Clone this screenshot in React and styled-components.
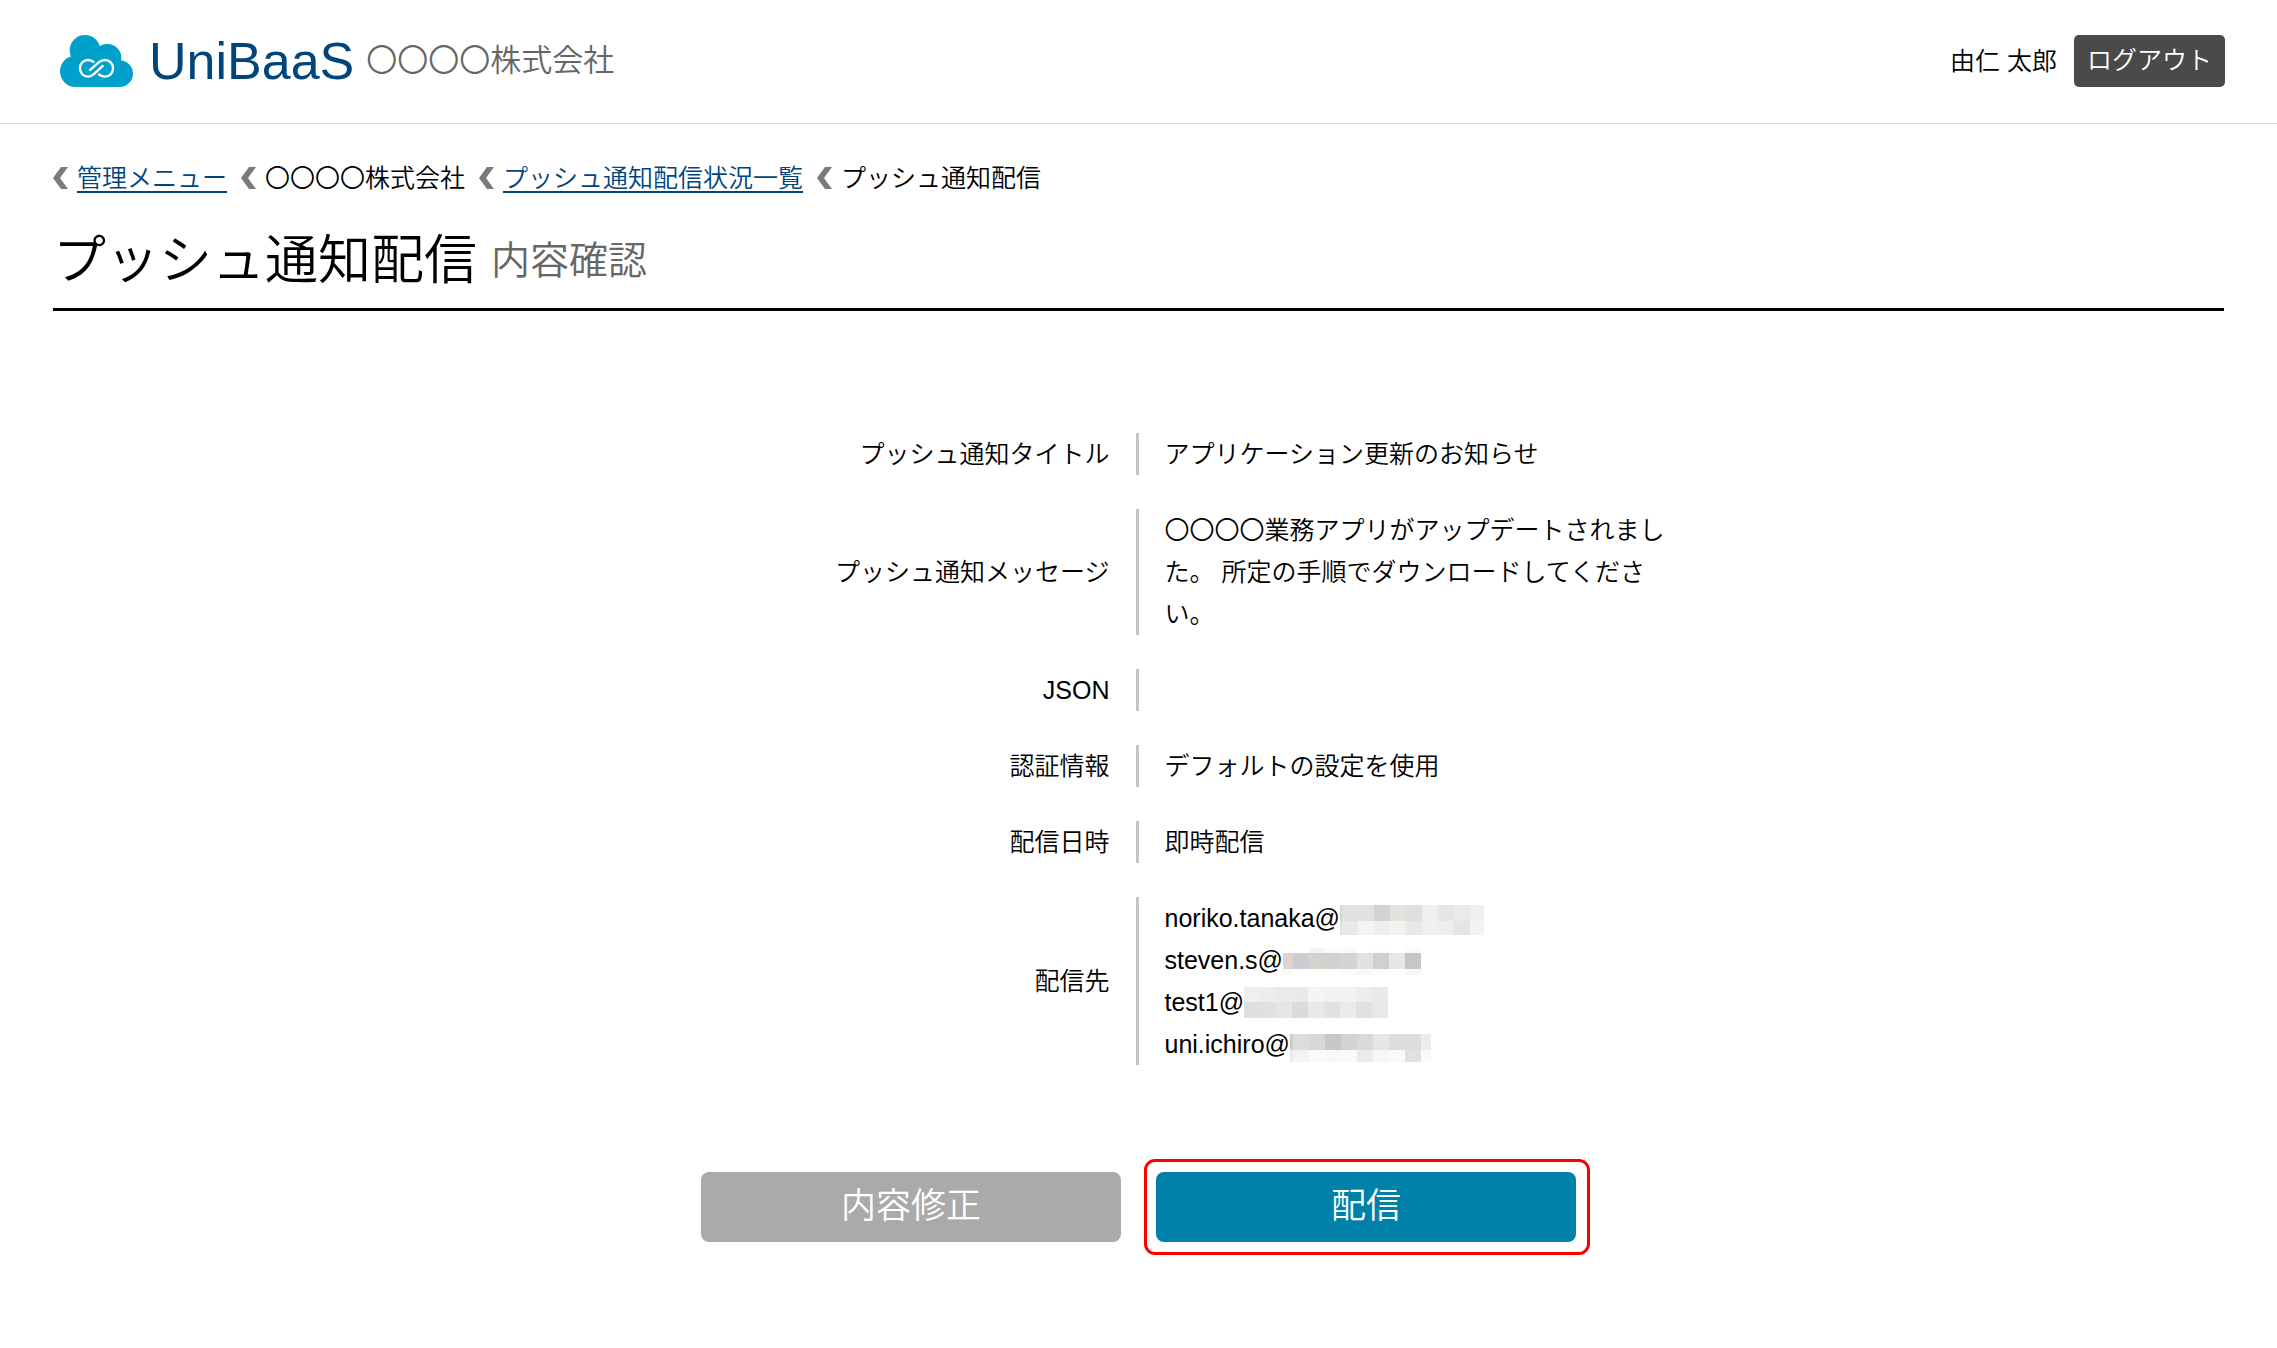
import React from "react";
import styled, { createGlobalStyle } from "styled-components";

const GlobalStyle = createGlobalStyle`
  * {
    box-sizing: border-box;
  }

  body {
    margin: 0;
    background: #fff;
    color: #000;
    font-family: "Liberation Sans", "Noto Sans CJK JP", sans-serif;
    font-size: 25px;
    font-weight: 350;
    line-height: 42px;
  }
`;

const Header = styled.header`
  display: flex;
  justify-content: space-between;
  align-items: center;
  height: 124px;
  padding: 0 52px 2px 60px;
  border-bottom: 1px solid #ddd;
`;

const Brand = styled.div`
  display: flex;
  align-items: center;
`;

const BrandName = styled.span`
  margin: 0 12px 0 16px;
  color: #00457c;
  font-size: 52px;
  font-weight: 400;
`;

const Company = styled.span`
  color: #666;
  font-size: 31px;
`;

const Account = styled.div`
  display: flex;
  align-items: center;
  gap: 17px;
`;

const LogoutButton = styled.button`
  height: 52px;
  padding: 0 13px 2px;
  border: 0;
  border-radius: 5px;
  background: #4a4a4a;
  color: #fff;
  font: inherit;
  cursor: pointer;
`;

const Main = styled.main`
  padding: 33px 53px 93px;
`;

const Breadcrumbs = styled.ol`
  display: flex;
  gap: 14px;
  margin: 0;
  padding: 0;
  list-style: none;
`;

const Crumb = styled.li`
  display: flex;
  align-items: center;
  gap: 9px;

  a {
    color: #00457c;
    text-decoration-thickness: 2px;
    text-underline-offset: 4px;
  }
`;

const Title = styled.h1`
  display: flex;
  align-items: center;
  gap: 14px;
  margin: 23px 0 122px;
  padding-bottom: 8px;
  border-bottom: 3px solid #000;
  font-size: 53px;
  font-weight: 350;
  line-height: 78px;
`;

const Subtitle = styled.small`
  color: #666;
  font-size: 39px;
`;

const Details = styled.dl`
  display: flex;
  flex-direction: column;
  gap: 34px;
  max-width: 1106px;
  margin: 0 auto;
`;

const Detail = styled.div`
  display: grid;
  grid-template-columns: 1fr 1fr;
`;

const Term = styled.dt`
  align-self: center;
  padding-right: 29px;
  text-align: right;
`;

const Value = styled.dd`
  min-height: 42px;
  margin: 0 0 0 -3px;
  padding: 0 10px 0 26px;
  border-left: 3px solid #c5c5c5;
`;

const Recipients = styled.ul`
  margin: 0;
  padding: 0;
  list-style: none;
`;

const Recipient = styled.li`
  display: flex;
  align-items: center;
  height: 42px;
`;

const Actions = styled.div`
  display: flex;
  justify-content: center;
  gap: 35px;
  margin-top: 107px;
`;

const ActionButton = styled.button`
  position: relative;
  width: 420px;
  height: 70px;
  padding: 0 0 2px;
  border: 0;
  border-radius: 8px;
  background: ${({ $primary }) => ($primary ? "#0081a9" : "#aaa")};
  color: #fff;
  font: inherit;
  font-size: 35px;
  cursor: pointer;
`;

const Highlight = styled.span`
  position: absolute;
  inset: -13px -14px -13px -12px;
  border: 3px solid #f00;
  border-radius: 11px;
  pointer-events: none;
`;

function Logo() {
  return (
    <svg width="73" height="52" viewBox="0 0 219 156" aria-hidden="true">
      <g fill="#00a0cc">
        <circle cx="47" cy="109" r="47" />
        <circle cx="75" cy="46" r="46" />
        <circle cx="142" cy="69" r="42" />
        <circle cx="179" cy="116" r="40" />
        <rect x="47" y="60" width="132" height="96" />
      </g>
      <g
        fill="none"
        stroke="#fff"
        strokeWidth="7"
        strokeLinecap="butt"
        strokeLinejoin="round"
      >
        <path d="M103 82C97 77 91 75 84 75C70 75 60 86 60 100C60 114 70 125 84 125C92 125 98 121 104 115L130 91" />
        <path d="M88 107L116 82C122 77 128 75 135 75C149 75 159 86 159 100C159 114 149 125 135 125C128 125 121 122 115 117" />
      </g>
    </svg>
  );
}

function Chevron() {
  return (
    <svg width="15" height="22" viewBox="0 0 15 22" aria-hidden="true">
      <path d="M8 0H15L7 11L15 22H8L0 11Z" fill="#7b7b7b" />
    </svg>
  );
}

// Each strip is one line of blocks: top, height, then [width, color] pairs
function Mosaic({ strips }) {
  return (
    <svg width="146" height="36" aria-hidden="true" shapeRendering="crispEdges">
      {strips.map(({ y, height, cells }) => {
        let x = 0;
        return cells.map(([width, color], index) => {
          const left = x;
          x += width;
          return (
            <rect
              key={`${y}-${index}`}
              x={left}
              y={y}
              width={width}
              height={height}
              fill={color}
            />
          );
        });
      })}
    </svg>
  );
}

const recipients = [
  {
    account: "noriko.tanaka@",
    strips: [
      {
        y: 5,
        height: 16,
        cells: [[2, "#d6d8d8"], [16, "#e0e2e2"], [16, "#e2e2e2"], [16, "#d3d3d1"], [16, "#e2e3de"], [16, "#dddfe1"], [16, "#efeff0"], [16, "#e6e6e7"], [16, "#eaeaea"], [14, "#efefef"]],
      },
      {
        y: 21,
        height: 14,
        cells: [[2, "#dfe1e1"], [16, "#e8eae9"], [16, "#f4f4f4"], [16, "#eeeeee"], [16, "#f2f3f0"], [16, "#e7e9e8"], [16, "#f0f0f0"], [16, "#eeeeee"], [16, "#e5e4e2"], [14, "#f1f3f6"]],
      },
    ],
  },
  {
    account: "steven.s@",
    strips: [
      {
        y: 6,
        height: 5,
        cells: [[10, "#fcfcfc"], [16, "#fff"], [16, "#f5f4f2"], [16, "#fcfcfc"], [16, "#f9f9f8"], [16, "#fff"], [16, "#fdfdfd"], [16, "#fff"], [16, "#fbfbfb"]],
      },
      {
        y: 11,
        height: 16,
        cells: [[10, "#dad6d4"], [16, "#cbcdd2"], [16, "#d3d2cd"], [16, "#cfd2d3"], [16, "#d4d4d1"], [16, "#e1e2e2"], [16, "#d0d0d1"], [16, "#e6e7e7"], [16, "#c8c5c6"]],
      },
      {
        y: 27,
        height: 6,
        cells: [[10, "#f9f9f9"], [16, "#fff"], [16, "#fff"], [16, "#fff"], [16, "#fbfbfb"], [16, "#fafafa"], [16, "#fdfdfd"], [16, "#fff"], [16, "#f8f8f8"]],
      },
    ],
  },
  {
    account: "test1@",
    strips: [
      {
        y: 3,
        height: 15,
        cells: [[16, "#efeff0"], [16, "#ededee"], [16, "#e9eaea"], [16, "#e8eae9"], [16, "#f3f4f5"], [16, "#f2f2f2"], [16, "#f1f2f2"], [16, "#eeedec"], [16, "#e9e9e9"]],
      },
      {
        y: 18,
        height: 16,
        cells: [[16, "#dfdfdf"], [16, "#e0e0e0"], [16, "#e3e5e8"], [16, "#dedadc"], [16, "#e8e9e9"], [16, "#e2e2e2"], [16, "#e9ecea"], [16, "#e3e1e0"], [16, "#e8e8e8"]],
      },
    ],
  },
  {
    account: "uni.ichiro@",
    strips: [
      {
        y: 8,
        height: 16,
        cells: [[3, "#cccccd"], [16, "#dbdde0"], [16, "#dbd7d6"], [16, "#c5c9cc"], [16, "#d4d3cf"], [16, "#d6dadd"], [16, "#e6e7e5"], [16, "#dcdddf"], [16, "#dddddd"], [10, "#ececec"]],
      },
      {
        y: 24,
        height: 12,
        cells: [[3, "#ebebeb"], [16, "#f1f4f2"], [16, "#f9faf9"], [16, "#f8f8f8"], [16, "#fafbf8"], [16, "#ebebeb"], [16, "#f7f7f7"], [16, "#fafafa"], [16, "#e1e1e1"], [10, "#fafafa"]],
      },
    ],
  },
];

const details = [
  { term: "プッシュ通知タイトル", value: "アプリケーション更新のお知らせ" },
  {
    term: "プッシュ通知メッセージ",
    value:
      "〇〇〇〇業務アプリがアップデートされました。 所定の手順でダウンロードしてください。",
  },
  { term: "JSON", value: "" },
  { term: "認証情報", value: "デフォルトの設定を使用" },
  { term: "配信日時", value: "即時配信" },
];

const crumbs = [
  { label: "管理メニュー", href: "#menu" },
  { label: "〇〇〇〇株式会社" },
  { label: "プッシュ通知配信状況一覧", href: "#list" },
  { label: "プッシュ通知配信" },
];

export default function App() {
  return (
    <>
      <GlobalStyle />
      <Header>
        <Brand>
          <Logo />
          <BrandName>UniBaaS</BrandName>
          <Company>〇〇〇〇株式会社</Company>
        </Brand>
        <Account>
          <span>由仁 太郎</span>
          <LogoutButton type="button">ログアウト</LogoutButton>
        </Account>
      </Header>

      <Main>
        <nav>
          <Breadcrumbs>
            {crumbs.map(({ label, href }) => (
              <Crumb key={label}>
                <Chevron />
                {href ? <a href={href}>{label}</a> : <span>{label}</span>}
              </Crumb>
            ))}
          </Breadcrumbs>
        </nav>

        <Title>
          プッシュ通知配信
          <Subtitle>内容確認</Subtitle>
        </Title>

        <Details>
          {details.map(({ term, value }) => (
            <Detail key={term}>
              <Term>{term}</Term>
              <Value>{value}</Value>
            </Detail>
          ))}
          <Detail>
            <Term>配信先</Term>
            <Value>
              <Recipients>
                {recipients.map(({ account, strips }) => (
                  <Recipient key={account}>
                    {account}
                    <Mosaic strips={strips} />
                  </Recipient>
                ))}
              </Recipients>
            </Value>
          </Detail>
        </Details>

        <Actions>
          <ActionButton type="button">内容修正</ActionButton>
          <ActionButton type="button" $primary>
            配信
            <Highlight />
          </ActionButton>
        </Actions>
      </Main>
    </>
  );
}
